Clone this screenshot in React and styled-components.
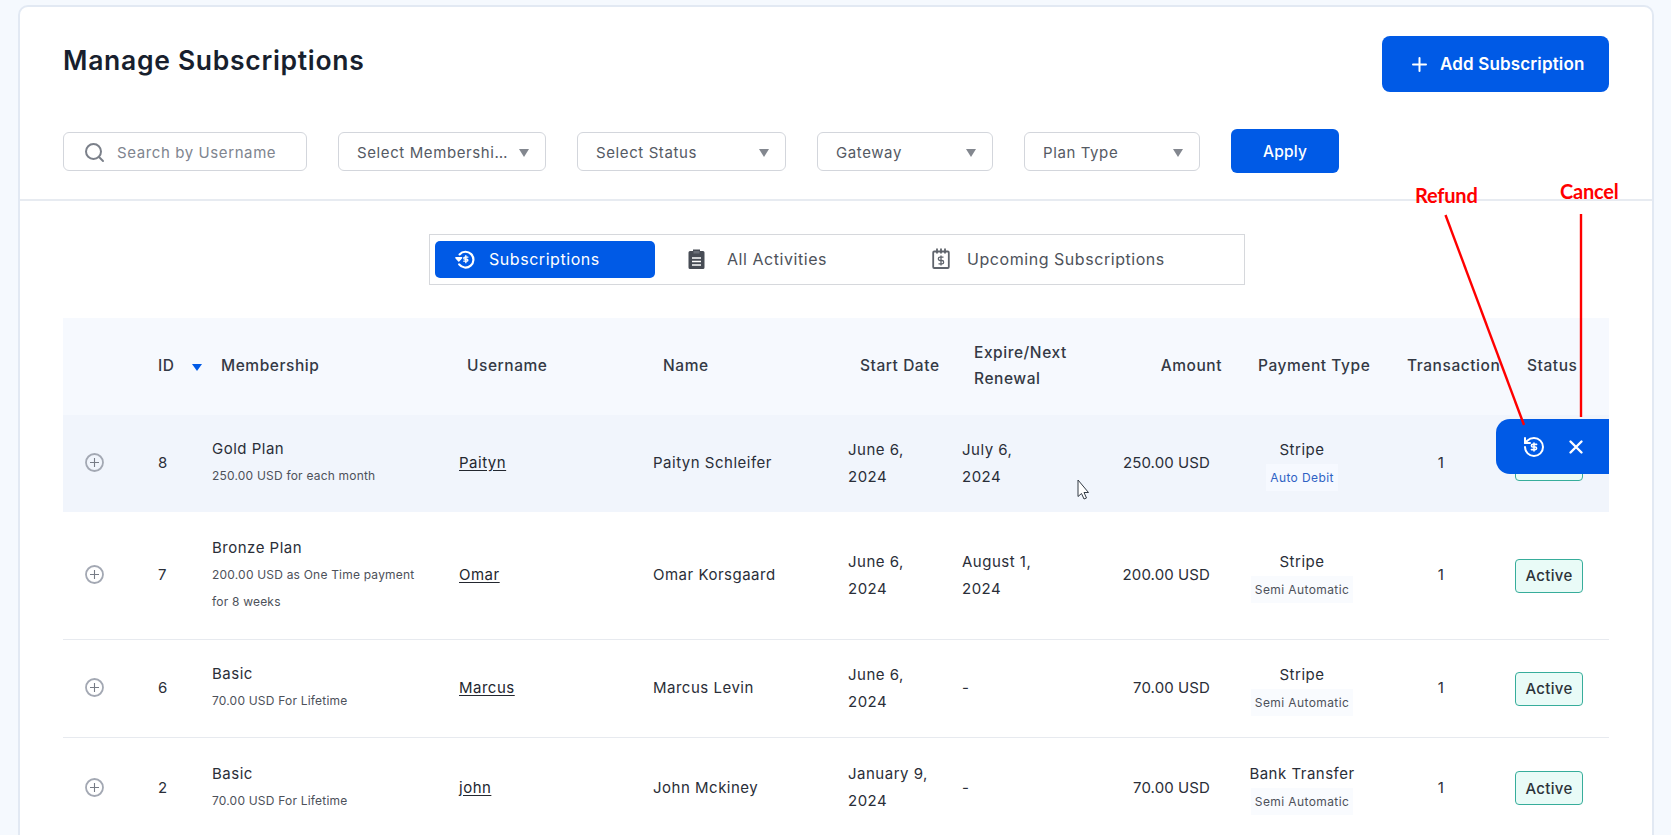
import React from "react";
import styled, { createGlobalStyle, css } from "styled-components";

const Global = createGlobalStyle`
  html, body {
    margin: 0;
    height: 100%;
    overflow: hidden;
    background: #f5f9fe;
  }
  * { box-sizing: border-box; }
  body {
    font-family: Inter, "Open Sans", sans-serif;
    color: #2a2e38;
  }
  svg { flex: none; }
`;

const BLUE = "#005ae6";

const Page = styled.div`
  position: relative;
  height: 835px;
  overflow: hidden;
  padding: 5px 17px 0 18px;
`;

const Card = styled.div`
  background: #fff;
  border: 2px solid #e2e9f3;
  border-radius: 10px 10px 0 0;
  height: 900px;
`;

const Top = styled.div`
  padding: 29px 43px 26px;
  border-bottom: 2px solid #e7ebf1;
`;

const TitleRow = styled.div`
  display: flex;
  justify-content: space-between;
  align-items: flex-start;
`;

const Title = styled.h1`
  margin: 8px 0 0;
  font-size: 26.5px;
  line-height: 32px;
  font-weight: 600;
  letter-spacing: 0.7px;
  color: #181f2e;
`;

const AddButton = styled.button`
  width: 227px;
  height: 56px;
  display: flex;
  align-items: center;
  justify-content: flex-start;
  padding-left: 30px;
  gap: 13px;
  background: ${BLUE};
  color: #fff;
  border: none;
  border-radius: 8px;
  font: 600 17px Inter, sans-serif;
  letter-spacing: 0.15px;
  white-space: nowrap;
`;

const Filters = styled.div`
  display: flex;
  align-items: center;
  gap: 31px;
  margin-top: 37px;
`;

const Field = styled.div`
  width: ${(p) => p.$w}px;
  height: 39px;
  display: flex;
  align-items: center;
  padding: ${(p) => (p.$search ? "2px 0 0 20px" : "3px 16px 0 18px")};
  gap: 12px;
  background: #fff;
  border: 1px solid #d3d6dc;
  border-radius: 6px;
  font-size: 15px;
  letter-spacing: 0.6px;
  color: ${(p) => (p.$search ? "#80858f" : "#555a64")};
`;

const FieldText = styled.span`
  flex: 1;
  white-space: nowrap;
  overflow: hidden;
`;

const Caret = styled.span`
  width: 0;
  height: 0;
  flex: none;
  border-left: 5.5px solid transparent;
  border-right: 5.5px solid transparent;
  border-top: 8px solid #83878f;
`;

const ApplyButton = styled.button`
  width: 108px;
  height: 44px;
  background: ${BLUE};
  color: #fff;
  border: none;
  border-radius: 6px;
  font: 500 15.5px Inter, sans-serif;
  letter-spacing: 0.2px;
`;

const Body = styled.div`
  padding: 33px 43px 0;
`;

const TabBox = styled.div`
  width: 816px;
  height: 51px;
  margin-left: 366px;
  display: flex;
  padding: 6px 5px;
  border: 1px solid #d6d8dc;
`;

const Tab = styled.div`
  flex: ${(p) => (p.$fill ? "1" : "0 0 220px")};
  display: flex;
  align-items: center;
  padding-left: ${(p) => p.$pad}px;
  padding-bottom: 2px;
  gap: ${(p) => p.$gap}px;
  border-radius: 5px;
  font-size: 16px;
  letter-spacing: 0.55px;
  white-space: nowrap;
  background: ${(p) => (p.$active ? BLUE : "transparent")};
  color: ${(p) => (p.$active ? "#fff" : "#4e525a")};
`;

const columns = css`
  display: grid;
  grid-template-columns: 95px 55px 246px 194px 195px 114px 133px 127px 160px 118px 1fr;
  align-items: center;
`;

const Table = styled.div`
  margin-top: 33px;
`;

const HeadRow = styled.div`
  ${columns}
  height: 97px;
  padding-bottom: 2px;
  background: #f6f9fe;
  font-size: 15.5px;
  font-weight: 500;
  letter-spacing: 0.55px;
  line-height: 26px;
  color: #343945;
`;

const HeadCell = styled.div`
  padding-left: ${(p) => p.$pad || 0}px;
  text-align: ${(p) => (p.$right ? "right" : "left")};
  white-space: nowrap;
  position: relative;
`;

const SortMark = styled.span`
  position: absolute;
  left: 34px;
  top: 11px;
  width: 0;
  height: 0;
  border-left: 5px solid transparent;
  border-right: 5px solid transparent;
  border-top: 7px solid ${BLUE};
`;

const Row = styled.div`
  ${columns}
  position: relative;
  height: ${(p) => p.$h}px;
  padding-bottom: 2px;
  font-size: 15px;
  letter-spacing: 0.5px;
  line-height: 27px;
  background: ${(p) => (p.$hover ? "#f1f5fc" : "#fff")};
  border-bottom: ${(p) => (p.$line ? "1px solid #e7eaef" : "none")};
`;

const Expander = styled.div`
  padding-left: 22px;
  display: flex;
`;

const Plan = styled.div`
  white-space: nowrap;
  margin-left: -1px;
`;

const Sub = styled.div`
  font-size: 12px;
  letter-spacing: 0.2px;
  line-height: 27.5px;
  color: #4d515a;
`;

const UserLink = styled.a`
  color: #23272f;
  text-decoration: underline;
  text-underline-offset: 2px;
`;

const Dates = styled.div`
  padding-right: 20px;
`;

const AmountCell = styled.div`
  text-align: right;
  padding-right: 12px;
  white-space: nowrap;
  letter-spacing: 0.1px;
`;

const PayCell = styled.div`
  text-align: center;
  padding-top: 1px;
`;

const PayMode = styled.span`
  display: inline-block;
  font-size: 12px;
  letter-spacing: 0.4px;
  padding: 0 4px;
  background: ${(p) => (p.$auto ? "#f6f9ff" : "#f9fbfe")};
  color: ${(p) => (p.$auto ? "#2f62c4" : "#4d515a")};
`;

const CountCell = styled.div`
  text-align: center;
`;

const StatusCell = styled.div`
  padding: 2px 0 0 15px;
`;

const Badge = styled.span`
  display: flex;
  width: 68px;
  height: 34px;
  align-items: center;
  justify-content: center;
  background: #e9fbf7;
  border: 1px solid #37ad9b;
  border-radius: 4px;
  font-size: 15px;
  font-weight: 500;
  letter-spacing: 0.3px;
  color: #2d333a;
`;

const ActionPop = styled.div`
  position: absolute;
  top: 4px;
  right: 0;
  width: 113px;
  height: 55px;
  display: flex;
  align-items: center;
  padding-left: 26px;
  gap: 22px;
  background: ${BLUE};
  border-radius: 14px 0 0 14px;
`;

const Overlay = styled.svg`
  position: absolute;
  inset: 0;
  width: 100%;
  height: 100%;
  pointer-events: none;
`;

const Note = styled.span`
  position: absolute;
  left: ${(p) => p.$x}px;
  top: ${(p) => p.$y}px;
  font: 700 20px Lato, sans-serif;
  letter-spacing: -0.2px;
  color: #f00;
`;

const SearchIcon = () => (
  <svg width="21" height="21" viewBox="0 0 21 21" fill="none" stroke="#7b808a" strokeWidth="2">
    <circle cx="9.5" cy="9.5" r="7.5" />
    <path d="M15 15l4 4" strokeLinecap="round" />
  </svg>
);

const PlusIcon = () => (
  <svg width="15" height="15" viewBox="0 0 15 15" stroke="#fff" strokeWidth="2" strokeLinecap="round">
    <path d="M7.5 1v13M1 7.5h13" />
  </svg>
);

const RefundIcon = ({ size }) => (
  <svg width={size} height={size} viewBox="0 0 24 24" fill="none" stroke="#fff" strokeWidth="2" strokeLinecap="round" strokeLinejoin="round">
    <path d="M3 12a9 9 0 1 0 9-9 9.75 9.75 0 0 0-6.74 2.74L3 8" />
    <path d="M3 3v5h5" />
    <path transform="translate(4.2 4.2) scale(.65)" d="M16 8h-6a2 2 0 1 0 0 4h4a2 2 0 1 1 0 4H8M12 18V6" strokeWidth="2.4" />
  </svg>
);

const SubscribeIcon = () => (
  <svg width="20" height="20" viewBox="0 0 24 24" fill="none" stroke="#fff" strokeWidth="2.6" strokeLinecap="round" strokeLinejoin="round">
    <path d="M5.5 6.5A9.5 9.5 0 1 1 5 18.5" />
    <path d="M1 10.5l3.5 4 3.5-4z" fill="#fff" strokeWidth="1.6" />
    <path transform="translate(5.8 5) scale(.6)" d="M16 8h-6a2 2 0 1 0 0 4h4a2 2 0 1 1 0 4H8M12 19V5" strokeWidth="2.8" />
  </svg>
);

const ClipboardIcon = () => (
  <svg width="17" height="21" viewBox="0 0 17 21">
    <path d="M2 3h3V1.5h7V3h3a1.5 1.5 0 0 1 1.5 1.5v15A1.5 1.5 0 0 1 15 21H2a1.5 1.5 0 0 1-1.5-1.5v-15A1.5 1.5 0 0 1 2 3z" fill="#474c55" />
    <path d="M4 10h9M4 13.5h9M4 17h9" stroke="#fff" strokeWidth="1.4" />
    <rect x="5.5" y="3" width="6" height="2.5" fill="#6a6f78" />
  </svg>
);

const CalendarIcon = () => (
  <svg width="18" height="21" viewBox="0 0 18 21" fill="none" stroke="#5f646c" strokeWidth="1.8">
    <rect x="1.2" y="3.5" width="15.6" height="16.5" rx="1" />
    <path d="M5 .5v5M9 .5v5M13 .5v5" />
    <path d="M11.5 9.2H8a1.6 1.6 0 0 0 0 3.3h2a1.6 1.6 0 0 1 0 3.3H6.500M9 7.500v10" strokeWidth="1.3" />
  </svg>
);

const ExpandIcon = () => (
  <svg width="19" height="19" viewBox="0 0 19 19" fill="none" stroke="#a3a8b3" strokeWidth="1.8">
    <circle cx="9.5" cy="9.5" r="8.5" />
    <path d="M9.5 5v9M5 9.5h9" strokeWidth="1.1" stroke="#777c86" />
  </svg>
);

const CloseIcon = () => (
  <svg width="16" height="16" viewBox="0 0 16 16" stroke="#fff" strokeWidth="2.4" strokeLinecap="round">
    <path d="M2.5 2.5l11 11M13.5 2.5l-11 11" />
  </svg>
);

const rows = [
  { id: 8, plan: "Gold Plan", sub: ["250.00 USD for each month"], user: "Paityn", name: "Paityn Schleifer", start: ["June 6,", "2024"], end: ["July 6,", "2024"], amount: "250.00 USD", pay: "Stripe", mode: "Auto Debit", h: 97, hover: true },
  { id: 7, plan: "Bronze Plan", sub: ["200.00 USD as One Time payment", "for 8 weeks"], user: "Omar", name: "Omar Korsgaard", start: ["June 6,", "2024"], end: ["August 1,", "2024"], amount: "200.00 USD", pay: "Stripe", mode: "Semi Automatic", h: 128, line: true },
  { id: 6, plan: "Basic", sub: ["70.00 USD For Lifetime"], user: "Marcus", name: "Marcus Levin", start: ["June 6,", "2024"], end: ["-"], amount: "70.00 USD", pay: "Stripe", mode: "Semi Automatic", h: 98, line: true },
  { id: 2, plan: "Basic", sub: ["70.00 USD For Lifetime"], user: "john", name: "John Mckiney", start: ["January 9,", "2024"], end: ["-"], amount: "70.00 USD", pay: "Bank Transfer", mode: "Semi Automatic", h: 100 },
];

const App = () => {
  return (
    <Page>
      <Global />
      <Card>
        <Top>
          <TitleRow>
            <Title>Manage Subscriptions</Title>
            <AddButton>
              <PlusIcon />
              Add Subscription
            </AddButton>
          </TitleRow>
          <Filters>
            <Field $w={244} $search>
              <SearchIcon />
              <FieldText>Search by Username</FieldText>
            </Field>
            <Field $w={208}>
              <FieldText>Select Membershi…</FieldText>
              <Caret />
            </Field>
            <Field $w={209}>
              <FieldText>Select Status</FieldText>
              <Caret />
            </Field>
            <Field $w={176}>
              <FieldText>Gateway</FieldText>
              <Caret />
            </Field>
            <Field $w={176}>
              <FieldText>Plan Type</FieldText>
              <Caret />
            </Field>
            <ApplyButton>Apply</ApplyButton>
          </Filters>
        </Top>
        <Body>
          <TabBox>
            <Tab $active $pad={20} $gap={14}>
              <SubscribeIcon />
              Subscriptions
            </Tab>
            <Tab $pad={33} $gap={22}>
              <ClipboardIcon />
              All Activities
            </Tab>
            <Tab $fill $pad={57} $gap={17}>
              <CalendarIcon />
              Upcoming Subscriptions
            </Tab>
          </TabBox>
          <Table>
            <HeadRow>
              <HeadCell />
              <HeadCell>
                ID
                <SortMark />
              </HeadCell>
              <HeadCell $pad={8}>Membership</HeadCell>
              <HeadCell $pad={8}>Username</HeadCell>
              <HeadCell $pad={10}>Name</HeadCell>
              <HeadCell $pad={12}>Start Date</HeadCell>
              <HeadCell $pad={12}>
                Expire/Next
                <br />
                Renewal
              </HeadCell>
              <HeadCell $right>Amount</HeadCell>
              <HeadCell $pad={36}>Payment Type</HeadCell>
              <HeadCell $pad={25}>Transaction</HeadCell>
              <HeadCell $pad={27}>Status</HeadCell>
            </HeadRow>
            {rows.map((r) => (
              <Row key={r.id} $h={r.h} $hover={r.hover} $line={r.line}>
                <Expander>
                  <ExpandIcon />
                </Expander>
                <div>{r.id}</div>
                <Plan>
                  {r.plan}
                  {r.sub.map((s) => (
                    <Sub key={s}>{s}</Sub>
                  ))}
                </Plan>
                <div>
                  <UserLink>{r.user}</UserLink>
                </div>
                <div>{r.name}</div>
                <Dates>
                  {r.start.map((s) => (
                    <div key={s}>{s}</div>
                  ))}
                </Dates>
                <Dates>
                  {r.end.map((s) => (
                    <div key={s}>{s}</div>
                  ))}
                </Dates>
                <AmountCell>{r.amount}</AmountCell>
                <PayCell>
                  {r.pay}
                  <br />
                  <PayMode $auto={r.mode === "Auto Debit"}>{r.mode}</PayMode>
                </PayCell>
                <CountCell>1</CountCell>
                <StatusCell>
                  <Badge>Active</Badge>
                </StatusCell>
                {r.hover && (
                  <ActionPop>
                    <RefundIcon size={24} />
                    <CloseIcon />
                  </ActionPop>
                )}
              </Row>
            ))}
          </Table>
        </Body>
      </Card>
      <Overlay viewBox="0 0 1671 835">
        <path d="M1445.5 215L1524 425" stroke="#f00" strokeWidth="2.4" />
        <path d="M1581 214V417" stroke="#f00" strokeWidth="2.4" />
        <path d="M1078 480v16.5l3.5-3 2.5 5.5 2.5-1-2.5-5.5h4.5z" fill="#fff" stroke="#333a44" strokeWidth="1" />
      </Overlay>
      <Note $x={1415} $y={183}>Refund</Note>
      <Note $x={1560} $y={179}>Cancel</Note>
    </Page>
  );
};

export default App;
